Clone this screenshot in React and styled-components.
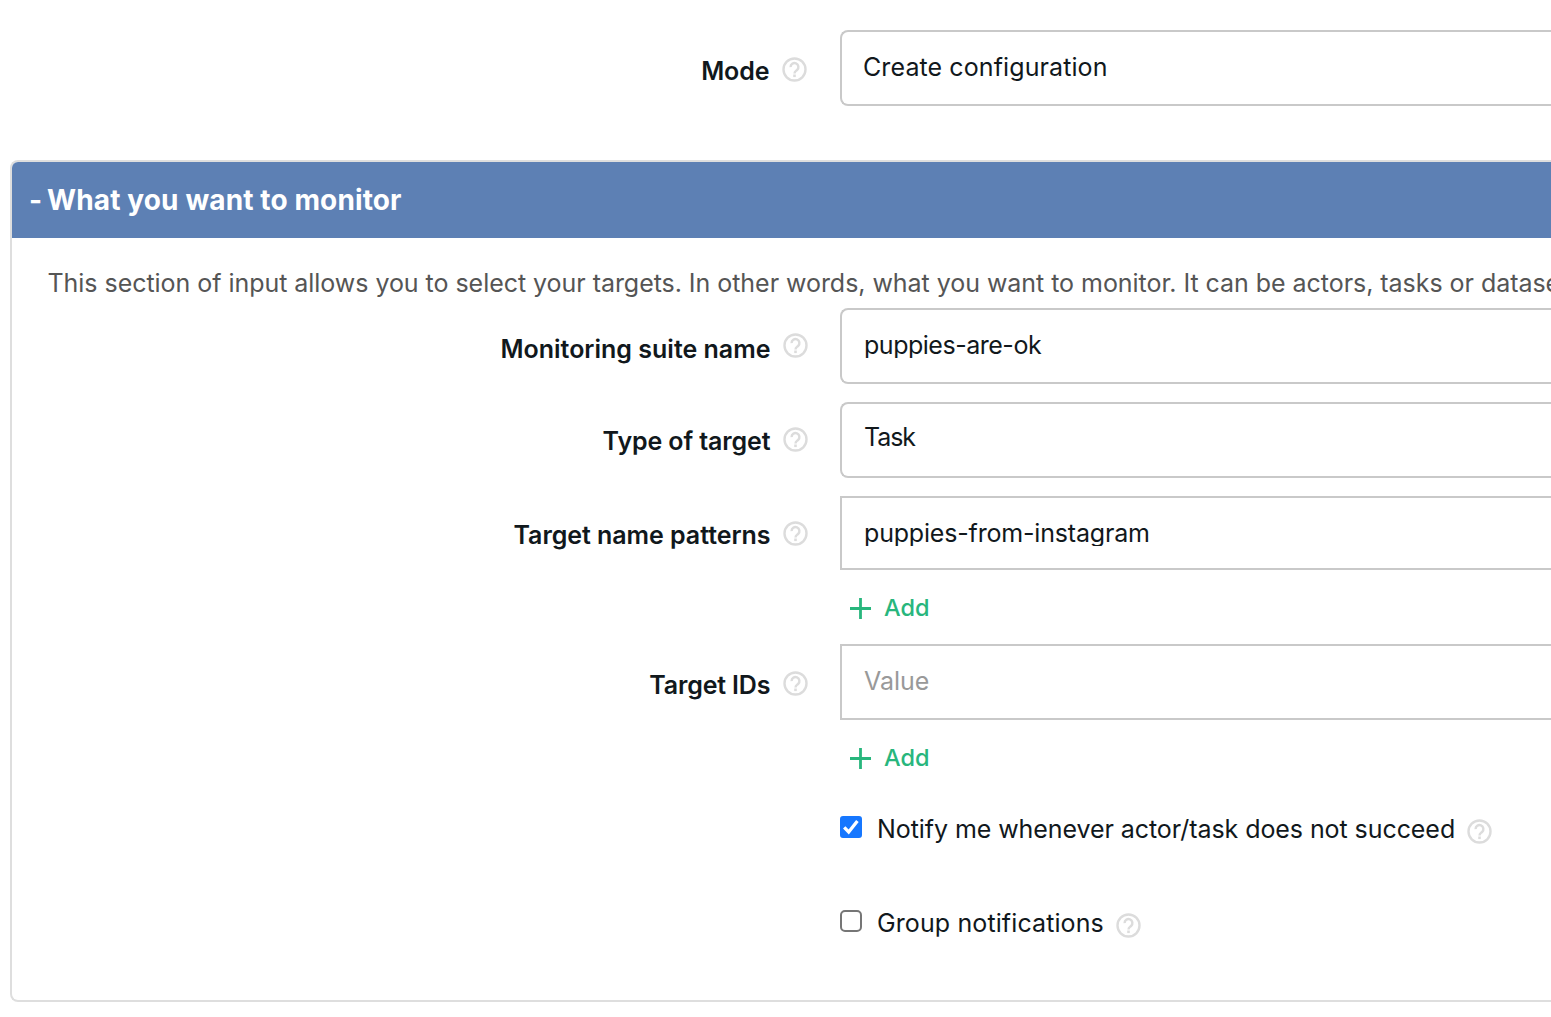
import React, { useState } from "react";
import styled, { createGlobalStyle } from "styled-components";

const Global = createGlobalStyle`
  *, *::before, *::after { box-sizing: border-box; }
  html, body { margin: 0; background: #fff; overflow: hidden; }
  body { font-family: Inter, "Liberation Sans", sans-serif; font-size: 25px; color: #11181c; }
`;

const Page = styled.main`
  width: 100%;
  height: 1017px;
  padding: 30px 0 0 10px;
  background: #fff;
  overflow: hidden;
`;

const Row = styled.div`
  display: grid;
  grid-template-columns: ${(p) => p.$gutter}px 1fr;
  height: ${(p) => p.$height}px;
`;

const LabelCell = styled.div`
  display: flex;
  justify-content: flex-end;
  align-items: flex-start;
  gap: 12.5px;
  padding-right: ${(p) => p.$inset}px;
`;

const Label = styled.label`
  padding-top: ${(p) => p.$top}px;
  line-height: 30px;
  font-weight: 600;
  letter-spacing: ${(p) => p.$track}px;
  margin-right: ${(p) => -p.$track}px;
  white-space: nowrap;
`;

const HelpIcon = styled.svg`
  display: block;
  flex: none;
  width: 25px;
  height: 25px;
  margin-top: ${(p) => p.$top}px;
  fill: none;
  stroke: #dcdcdc;
  stroke-width: 2.4;
`;

const Control = styled.div`
  height: ${(p) => p.$height || 76}px;
  padding: ${(p) => p.$top}px 0 0 ${(p) => p.$left || 22}px;
  border: 2px solid #c9c9c9;
  border-right: 0;
  border-radius: ${(p) => (p.$square ? 0 : "8px 0 0 8px")};
`;

const Value = styled.div`
  height: ${(p) => p.$clip || 30}px;
  overflow: hidden;
  line-height: 30px;
  letter-spacing: ${(p) => p.$track}px;
  color: ${(p) => (p.$muted ? "#999" : "inherit")};
  white-space: nowrap;
`;

const Panel = styled.section`
  height: 842px;
  margin-top: 54px;
  border: 2px solid #dedede;
  border-right: 0;
  border-radius: 8px 0 0 8px;
  overflow: hidden;
`;

const PanelHeader = styled.header`
  display: flex;
  gap: 5px;
  height: 76px;
  padding: 21px 0 0 17px;
  background: #5d80b4;
  color: #fff;
  font-size: 28px;
  font-weight: 700;
  line-height: 34px;
  white-space: nowrap;
`;

const Heading = styled.span`
  letter-spacing: ${(p) => p.$track}px;
`;

const Description = styled.p`
  height: 70px;
  margin: 0;
  padding: 30px 0 0 35.5px;
  line-height: 30px;
  color: #555;
  letter-spacing: ${(p) => p.$track}px;
  white-space: nowrap;
`;

const AddButton = styled.button`
  display: flex;
  align-items: center;
  gap: 13px;
  height: 30px;
  margin: ${(p) => p.$top}px 0 0 10px;
  padding: 0;
  border: 0;
  background: none;
  color: #28b67d;
  font: 500 23.5px/30px Inter, "Liberation Sans", sans-serif;
`;

const PlusIcon = styled.svg`
  display: block;
  width: 21px;
  height: 21px;
  stroke: currentColor;
  stroke-width: 2.8;
`;

const CheckRow = styled.div`
  display: flex;
  align-items: flex-start;
  height: 94px;
  padding-left: 828px;
`;

const CheckBox = styled.button`
  flex: none;
  width: 22px;
  height: 22px;
  padding: 0;
  border: 2px solid ${(p) => (p.$on ? "#1677ff" : "#767676")};
  border-radius: ${(p) => (p.$on ? 3 : 5)}px;
  background: ${(p) => (p.$on ? "#1677ff" : "#fff")};
`;

const Tick = styled.svg`
  display: block;
  width: 18px;
  height: 18px;
  fill: none;
  stroke: #fff;
  stroke-width: 3.3;
`;

const CheckLabel = styled.span`
  width: ${(p) => p.$width}px;
  margin-left: 15px;
  margin-top: -2px;
  line-height: 30px;
  letter-spacing: ${(p) => p.$track}px;
  white-space: nowrap;
`;

function Help({ top }) {
  return (
    <HelpIcon viewBox="0 0 25 25" $top={top}>
      <circle cx="12.5" cy="12.5" r="11" />
      <path d="M8.6 10.1a3.9 3.9 0 1 1 6.6 2.7c-1.4 1.3-2.7 1.8-2.7 3.6" />
      <path d="M12.5 17.5v2.6" strokeWidth="2.6" />
    </HelpIcon>
  );
}

function Plus() {
  return (
    <PlusIcon viewBox="0 0 21 21">
      <path d="M10.5 0v21M0 10.5h21" />
    </PlusIcon>
  );
}

function Field({ label, track, labelTop, helpTop, height, gutter = 828, inset = 32, children }) {
  return (
    <Row $height={height} $gutter={gutter}>
      <LabelCell $inset={inset}>
        <Label $top={labelTop} $track={track}>{label}</Label>
        <Help top={helpTop} />
      </LabelCell>
      <div>{children}</div>
    </Row>
  );
}

function Check({ label, track, width, initial }) {
  const [on, setOn] = useState(initial);
  return (
    <CheckRow>
      <CheckBox $on={on} role="checkbox" aria-checked={on} onClick={() => setOn(!on)}>
        {on && (
          <Tick viewBox="0 0 18 18">
            <path d="M2.2 9.4l4.5 4.6L15.4 3" />
          </Tick>
        )}
      </CheckBox>
      <CheckLabel $track={track} $width={width}>{label}</CheckLabel>
      <Help top={3} />
    </CheckRow>
  );
}

export default function App() {
  return (
    <>
      <Global />
      <Page>
        <Field label="Mode" track={-0.1} labelTop={26} helpTop={27} height={76} gutter={830} inset={33}>
          <Control $top={20} $left={21}>
            <Value $track={0.1}>Create configuration</Value>
          </Control>
        </Field>
        <Panel>
          <PanelHeader>
            <span>-</span>
            <Heading $track={0.12}>What you want to monitor</Heading>
          </PanelHeader>
          <Description $track={-0.04}>
            This section of input allows you to select your targets. In other words, what you want to monitor. It can be actors, tasks or datasets.
          </Description>
          <Field label="Monitoring suite name" track={0} labelTop={26} helpTop={25} height={94}>
            <Control $top={20}>
              <Value $track={-0.48} $clip={28}>puppies-are-ok</Value>
            </Control>
          </Field>
          <Field label="Type of target" track={-0.12} labelTop={24} helpTop={25} height={94}>
            <Control $top={18}>
              <Value $track={-1.1}>Task</Value>
            </Control>
          </Field>
          <Field label="Target name patterns" track={-0.05} labelTop={24} helpTop={25} height={148}>
            <Control $top={20} $height={74} $square>
              <Value $track={-0.18} $clip={28}>puppies-from-instagram</Value>
            </Control>
            <AddButton $top={23}><Plus />Add</AddButton>
          </Field>
          <Field label="Target IDs" track={-0.15} labelTop={26} helpTop={27} height={172}>
            <Control $top={20} $square>
              <Value $track={0} $muted>Value</Value>
            </Control>
            <AddButton $top={23}><Plus />Add</AddButton>
          </Field>
          <Check label="Notify me whenever actor/task does not succeed" track={-0.07} width={590} initial />
          <Check label="Group notifications" track={0.11} width={239} initial={false} />
        </Panel>
      </Page>
    </>
  );
}
